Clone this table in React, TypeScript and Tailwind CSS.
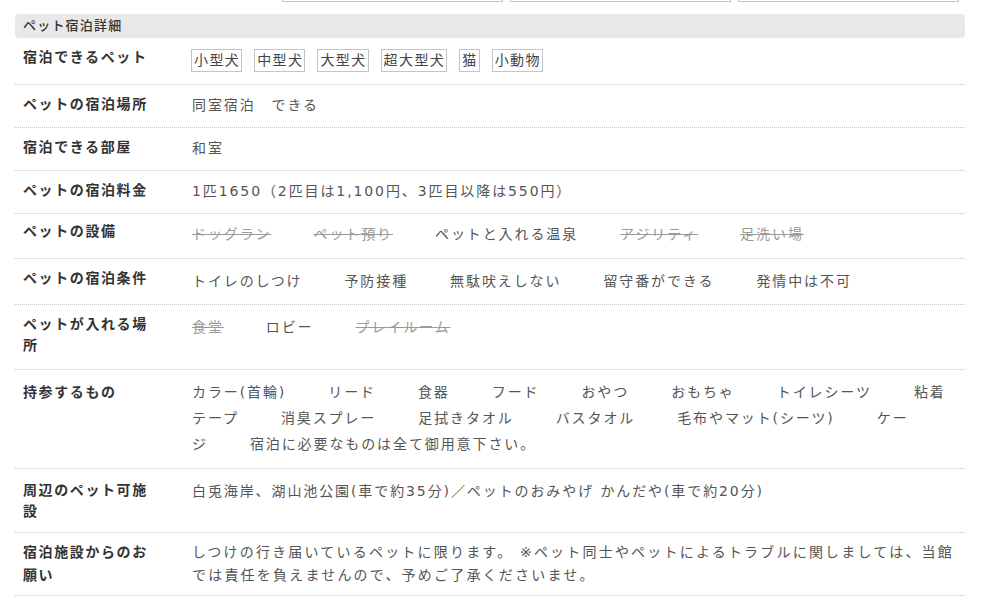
import React from "react";

const FONT = { fontFamily: '"DejaVu Sans", "Noto Sans CJK JP", "Noto Sans", sans-serif' };

type Item = { t: string; off?: boolean };

function Items({ items }: { items: Item[] }) {
  return (
    <div className="leading-[26px]">
      {items.map((it, i) => (
        <span
          key={i}
          className={
            (it.off ? "text-[#9a9a9a] line-through " : "text-[#555] ") + "mr-[42px]"
          }
        >
          {it.t}
        </span>
      ))}
    </div>
  );
}

function Row({
  label,
  children,
  rowClass = "pt-[9px] pb-[11px]",
  labelClass = "leading-[21px]",
}: {
  label: string;
  children: React.ReactNode;
  rowClass?: string;
  labelClass?: string;
}) {
  return (
    <div className={"flex items-start border-b border-dotted border-[#c8c8c8] " + rowClass}>
      <div
        className={
          "w-[177px] shrink-0 pl-[8px] pr-[39px] font-bold text-[#333] text-[14px] tracking-[1.6px] " +
          labelClass
        }
      >
        {label}
      </div>
      <div className="flex-1 pr-[8px] text-[14px] tracking-[1.9px] text-[#555] leading-[22px]">
        {children}
      </div>
    </div>
  );
}

export default function App() {
  const pets = ["小型犬", "中型犬", "大型犬", "超大型犬", "猫", "小動物"];
  return (
    <div className="w-[982px] h-[608px] bg-white overflow-hidden" style={FONT}>
      <div className="flex gap-[7px] pl-[282px] h-[2px]">
        <div className="w-[221px] h-[2px] border-x border-b border-[#c4c4c4]" />
        <div className="w-[221px] h-[2px] border-x border-b border-[#c4c4c4]" />
        <div className="w-[221px] h-[2px] border-x border-b border-[#c4c4c4]" />
      </div>
      <div className="mx-[15px] mt-[12px] w-[950px]">
        <div className="h-[24px] rounded-[4px] bg-[#e8e8e8] pl-[8px] flex items-center text-[13px] text-[#333] tracking-[1.2px] font-medium">
          ペット宿泊詳細
        </div>

        <Row label="宿泊できるペット" rowClass="pt-[9px] pb-[12px]">
          <div className="flex gap-[12px] mt-[2px] ml-[-1px]">
            {pets.map((p) => (
              <span
                key={p}
                className="h-[23px] leading-[21px] border border-[#c4c4c4] pl-[2px] pr-[1px] text-[#444] tracking-[1.4px]"
              >
                {p}
              </span>
            ))}
          </div>
        </Row>

        <Row label="ペットの宿泊場所">同室宿泊　できる</Row>
        <Row label="宿泊できる部屋">和室</Row>
        <Row label="ペットの宿泊料金">1匹1650（2匹目は1,100円、3匹目以降は550円）</Row>

        <Row label="ペットの設備" rowClass="pt-[7px] pb-[11px]">
          <Items
            items={[
              { t: "ドッグラン", off: true },
              { t: "ペット預り", off: true },
              { t: "ペットと入れる温泉" },
              { t: "アジリティ", off: true },
              { t: "足洗い場", off: true },
            ]}
          />
        </Row>

        <Row label="ペットの宿泊条件" rowClass="pt-[9px] pb-[10px]">
          <Items
            items={[
              { t: "トイレのしつけ" },
              { t: "予防接種" },
              { t: "無駄吠えしない" },
              { t: "留守番ができる" },
              { t: "発情中は不可" },
            ]}
          />
        </Row>

        <Row label="ペットが入れる場所" rowClass="pt-[9px] pb-[13px]">
          <Items
            items={[
              { t: "食堂", off: true },
              { t: "ロビー" },
              { t: "プレイルーム", off: true },
            ]}
          />
        </Row>

        <Row label="持参するもの" rowClass="pt-[9px] pb-[11px]" labelClass="leading-[26px]">
          <Items
            items={[
              { t: "カラー(首輪)" },
              { t: "リード" },
              { t: "食器" },
              { t: "フード" },
              { t: "おやつ" },
              { t: "おもちゃ" },
              { t: "トイレシーツ" },
              { t: "粘着テープ" },
              { t: "消臭スプレー" },
              { t: "足拭きタオル" },
              { t: "バスタオル" },
              { t: "毛布やマット(シーツ)" },
              { t: "ケージ" },
              { t: "宿泊に必要なものは全て御用意下さい。" },
            ]}
          />
        </Row>

        <Row label="周辺のペット可施設" rowClass="pt-[11px] pb-[10px]">
          白兎海岸、湖山池公園(車で約35分)／ペットのおみやげ かんだや(車で約20分)
        </Row>

        <Row
          label="宿泊施設からのお願い"
          rowClass="pt-[8px] pb-[8px]"
          labelClass="leading-[23px]"
        >
          <div className="leading-[23px] tracking-[2.2px]">
            しつけの行き届いているペットに限ります。 ※ペット同士やペットによるトラブルに関しましては、当館では責任を負えませんので、予めご了承くださいませ。
          </div>
        </Row>
      </div>
    </div>
  );
}
